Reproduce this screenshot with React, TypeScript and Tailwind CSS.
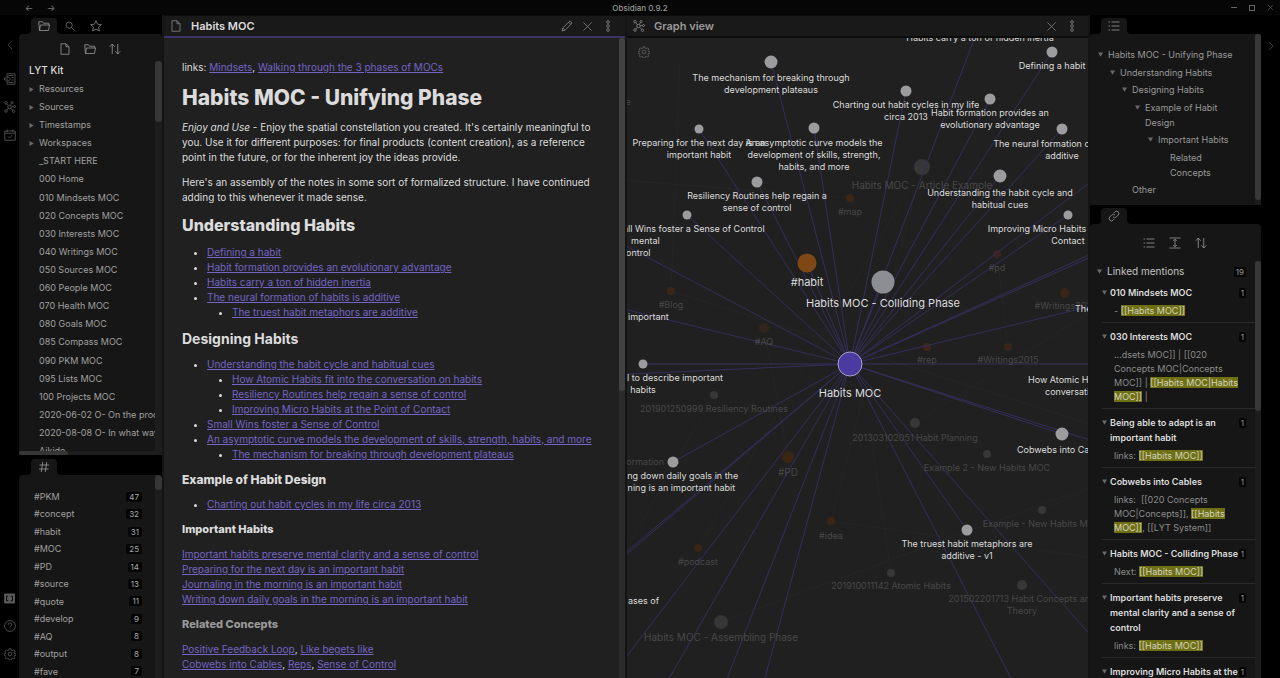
import React from 'react';
import clsx from 'clsx';

type IconProps = { children: React.ReactNode; size?: string; className?: string };

const Icon = ({ children, size = 'size-3', className }: IconProps) => (
  <svg
    viewBox="0 0 24 24"
    className={clsx(size, 'shrink-0', className)}
    fill="none"
    stroke="currentColor"
    strokeWidth="1.6"
    strokeLinejoin="round"
    aria-hidden="true"
  >
    {children}
  </svg>
);

const icons = {
  file: <path d="M4 1.5h10l6 6v15H4zM14 1.5v6h6" />,
  folder: <path d="M3 21L1.500 3.500H9l2 3h10.500V10M3 21L5 10h18l-2 11z" />,
  search: (
    <>
      <circle cx="10" cy="10" r="7.500" />
      <path d="M15.500 15.500l7 7" />
    </>
  ),
  star: <path d="M12 1.500l3.200 7 7.600.800-5.700 5.100 1.600 7.500-6.700-3.800-6.700 3.800 1.600-7.500L1.200 9.300l7.600-.800z" />,
  sort: <path d="M6.500 22V2M1.500 7.500l5-5.500 5 5.500M17.500 2v20M12.500 16.500l5 5.500 5-5.500" />,
  pencil: <path d="M2 22l1.500-6L18 1.800l4.200 4.200L8 20.500zM3.500 16L8 20.500M15.500 4.500l4 4" />,
  close: <path d="M3 3l18 18M21 3L3 21" />,
  dots: (
    <>
      <circle cx="12" cy="4" r="2.700" />
      <circle cx="12" cy="12" r="2.700" />
      <circle cx="12" cy="20" r="2.700" />
    </>
  ),
  graph: (
    <>
      <circle cx="11" cy="12" r="3.500" />
      <circle cx="4" cy="3.500" r="2.500" />
      <circle cx="16" cy="3" r="2" />
      <circle cx="21" cy="11" r="2" />
      <circle cx="19" cy="20.500" r="2.500" />
      <circle cx="4" cy="20" r="2.500" />
      <path d="M5.500 5.500l3.500 4M15 5l-2.500 4M19 11l-4.500.800M17.200 18.500l-4-4M5.600 18l3-3.500" />
    </>
  ),
  gear: (
    <>
      <circle cx="12" cy="12" r="3.800" />
      <path d="M10.200 1.500h3.600l.700 3 2.200.900 2.600-1.600 2.500 2.500-1.600 2.600.900 2.200 3 .700v2.400l-3 .700-.900 2.200 1.600 2.600-2.500 2.500-2.600-1.600-2.200.900-.700 3h-3.600l-.700-3-2.200-.900-2.600 1.600-2.500-2.500 1.600-2.600-.900-2.200-3-.700v-2.400l3-.700.900-2.200-1.600-2.600 2.500-2.500 2.600 1.600 2.200-.900z" />
    </>
  ),
  list: (
    <path d="M7 4h16M7 12h16M7 20h16M1 4h3M1 12h3M1 20h3" />
  ),
  expand: <path d="M1 2h22M1 22h22M12 4.500v15M8.500 8L12 4.500 15.500 8M8.500 16l3.500 3.500 3.500-3.500" />,
  link: (
    <path d="M10 14a4.500 4.500 0 0 0 6.500 0l4-4a4.600 4.600 0 0 0-6.500-6.500L11.500 6M14 10a4.500 4.500 0 0 0-6.500 0l-4 4a4.600 4.600 0 0 0 6.500 6.500l2.500-2.500" />
  ),
  hash: <path d="M3 8h19M2 16h19M9.500 2l-3 20M17.500 2l-3 20" />,
  left: <path d="M17 2L7 12l10 10" />,
  right: <path d="M7 2l10 10L7 22" />,
  quickOpen: (
    <>
      <path d="M6 8V1.500h16v21H6V16M9 5h10M15 9h4M15 14h4M9 19h10" />
      <path d="M1 10h7V7l5 5-5 5v-3H1z" />
    </>
  ),
  calendar: (
    <>
      <path d="M1.500 4h21v18.500h-21zM1.500 8.500h21M6.500 1v5M17.500 1v5" />
      <path d="M8 15l3 3 5.500-6" />
    </>
  ),
  vault: (
    <>
      <path d="M1 2h22v20H1z" fill="currentColor" />
      <path d="M9.500 7h-4v10h4M14.500 7h4v10h-4" stroke="#000" strokeWidth="2" />
    </>
  ),
  help: (
    <>
      <circle cx="12" cy="12" r="10.800" />
      <path d="M8.500 9.500a3.500 3.500 0 1 1 5 3.200c-1.200.600-1.500 1.200-1.500 2.500M12 17.200v1.800" />
    </>
  ),
};

type IconName = keyof typeof icons;

const IconButton = ({ name, label, size, className }: { name: IconName; label: string; size?: string; className?: string }) => (
  <button type="button" aria-label={label} className={clsx('flex items-center justify-center', className)}>
    <Icon size={size}>{icons[name]}</Icon>
  </button>
);

const files = [
  '_START HERE',
  '000 Home',
  '010 Mindsets MOC',
  '020 Concepts MOC',
  '030 Interests MOC',
  '040 Writings MOC',
  '050 Sources MOC',
  '060 People MOC',
  '070 Health MOC',
  '080 Goals MOC',
  '085 Compass MOC',
  '090 PKM MOC',
  '095 Lists MOC',
  '100 Projects MOC',
  '2020-06-02 O- On the process',
  '2020-08-08 O- In what ways',
  'Aikido',
];

const tags: [string, number][] = [
  ['#PKM', 47],
  ['#concept', 32],
  ['#habit', 31],
  ['#MOC', 25],
  ['#PD', 14],
  ['#source', 13],
  ['#quote', 11],
  ['#develop', 9],
  ['#AQ', 8],
  ['#output', 8],
  ['#fave', 7],
];

// Active tab with curved feet that blend into the panel below
const ActiveTab = ({ name, label }: { name: IconName; label: string }) => (
  <button
    type="button"
    aria-label={label}
    className="relative flex h-4 w-[26px] items-center justify-center rounded-t bg-[#161616] text-[#999]"
  >
    <Icon>{icons[name]}</Icon>
    <svg viewBox="0 0 4 4" className="absolute bottom-0 -left-1 size-1" aria-hidden="true">
      <path d="M4 0v4H0a4 4 0 0 0 4-4z" fill="#161616" />
    </svg>
    <svg viewBox="0 0 4 4" className="absolute -right-1 bottom-0 size-1" aria-hidden="true">
      <path d="M0 0v4h4a4 4 0 0 1-4-4z" fill="#161616" />
    </svg>
  </button>
);

const Caret = ({ open = false, className }: { open?: boolean; className?: string }) => (
  <svg viewBox="0 0 10 10" className={clsx('size-[5px] shrink-0', className)} fill="#6a6a6a" aria-hidden="true">
    {open ? <path d="M0 1h10L5 9.500z" /> : <path d="M1 0v10l8.500-5z" />}
  </svg>
);

const FileExplorer = () => (
  <section className="flex h-[421px] shrink-0 flex-col overflow-hidden rounded-t bg-[#161616]">
    <div className="flex h-[27px] shrink-0 items-center justify-center gap-[13px] pt-[2px] pr-[2px] text-[#999]">
      <IconButton name="file" label="New note" />
      <IconButton name="folder" label="New folder" />
      <IconButton name="sort" label="Change sort order" />
    </div>
    <div className="flex min-h-0 flex-1">
      <div className="min-w-0 flex-1 overflow-hidden">
        <h2 className="flex h-[19px] items-center pl-[10px] text-[10px] font-medium text-[#dcdcdc]">LYT Kit</h2>
        <ul className="text-[9px] text-[#a0a0a0]">
          {['Resources', 'Sources', 'Timestamps', 'Workspaces'].map((folder) => (
            <li key={folder}>
              <button type="button" className="flex h-[18px] w-full items-center gap-[5px] pl-[10px]">
                <Caret />
                {folder}
              </button>
            </li>
          ))}
        </ul>
        <ul className="grid h-[308px] auto-rows-fr text-[9px] text-[#a0a0a0]">
          {files.map((file) => (
            <li key={file}>
              <button type="button" className="flex h-full w-full items-center pl-5 whitespace-nowrap">
                {file}
              </button>
            </li>
          ))}
        </ul>
      </div>
      <div className="w-[7px] bg-[#1d1d1d]">
        <div className="h-[61px] rounded bg-[#363636]" />
      </div>
    </div>
    <div className="h-1 shrink-0 bg-[#1d1d1d]">
      <div className="h-1 w-[49px] rounded bg-[#363636]" />
    </div>
  </section>
);

const TagPane = () => (
  <section className="flex min-h-0 flex-1 overflow-hidden rounded-t bg-[#161616]">
    <ul className="mt-[13px] grid h-[192px] flex-1 auto-rows-fr pr-[13px] pl-[15px] text-[9px] text-[#a0a0a0]">
      {tags.map(([tag, count]) => (
        <li key={tag} className="flex items-center justify-between">
          <a href="#">{tag}</a>
          <span className="rounded-xs bg-[#050505] px-[3px] text-[8px] leading-[10px] text-[#aaa]">{count}</span>
        </li>
      ))}
    </ul>
    <div className="w-[7px] bg-[#1d1d1d]">
      <div className="h-[15px] rounded bg-[#363636]" />
    </div>
  </section>
);

const L = ({ children }: { children: React.ReactNode }) => (
  <a href="#" className="text-[#7464c4] underline">
    {children}
  </a>
);

const NotePane = () => (
  <main className="flex min-w-0 flex-1 flex-col bg-[#202020]">
    <header className="flex h-[23px] shrink-0 items-center border-t border-b-2 border-t-[#0c0c0c] border-b-[#3d3369] bg-[#191919] pr-[11px] pl-[6px] text-[#888]">
      <Icon>{icons.file}</Icon>
      <h1 className="flex-1 pl-[9px] text-[11px] leading-4 font-semibold text-[#dcdcdc]">Habits MOC</h1>
      <div className="flex items-center gap-[9px]">
        <IconButton name="pencil" label="Edit" />
        <IconButton name="close" label="Close note" size="size-[11px]" />
        <IconButton name="dots" label="More options" />
      </div>
    </header>
    <div className="flex min-h-0 flex-1">
      <article className="flex min-w-0 flex-1 flex-col gap-[10px] overflow-hidden pt-[22px] pr-6 pl-[18px] text-[10px] leading-[15px] text-[#dcdcdc] *:shrink-0">
        <p>
          links: <L>Mindsets</L>, <L>Walking through the 3 phases of MOCs</L>
        </p>
        <h1 className="text-[21px] leading-[25px] font-extrabold">Habits MOC - Unifying Phase</h1>
        <p>
          <em>Enjoy and Use</em> - Enjoy the spatial constellation you created. It's certainly meaningful to you. Use it
          for different purposes: for final products (content creation), as a reference point in the future, or for the
          inherent joy the ideas provide.
        </p>
        <p>
          Here's an assembly of the notes in some sort of formalized structure. I have continued adding to this whenever
          it made sense.
        </p>
        <h2 className="text-[16px] leading-5 font-extrabold">Understanding Habits</h2>
        <ul className="list-disc pl-[25px]">
          <li><L>Defining a habit</L></li>
          <li><L>Habit formation provides an evolutionary advantage</L></li>
          <li><L>Habits carry a ton of hidden inertia</L></li>
          <li>
            <L>The neural formation of habits is additive</L>
            <ul className="list-disc pl-[25px]">
              <li><L>The truest habit metaphors are additive</L></li>
            </ul>
          </li>
        </ul>
        <h3 className="text-[14px] leading-[17px] font-bold">Designing Habits</h3>
        <ul className="list-disc pl-[25px]">
          <li>
            <L>Understanding the habit cycle and habitual cues</L>
            <ul className="list-disc pl-[25px]">
              <li><L>How Atomic Habits fit into the conversation on habits</L></li>
              <li><L>Resiliency Routines help regain a sense of control</L></li>
              <li><L>Improving Micro Habits at the Point of Contact</L></li>
            </ul>
          </li>
          <li><L>Small Wins foster a Sense of Control</L></li>
          <li>
            <L>An asymptotic curve models the development of skills, strength, habits, and more</L>
            <ul className="list-disc pl-[25px]">
              <li><L>The mechanism for breaking through development plateaus</L></li>
            </ul>
          </li>
        </ul>
        <h4 className="text-[12px] font-extrabold">Example of Habit Design</h4>
        <ul className="list-disc pl-[25px]">
          <li><L>Charting out habit cycles in my life circa 2013</L></li>
        </ul>
        <h5 className="text-[11px] font-extrabold">Important Habits</h5>
        <p>
          <L>Important habits preserve mental clarity and a sense of control</L>
          <br />
          <L>Preparing for the next day is an important habit</L>
          <br />
          <L>Journaling in the morning is an important habit</L>
          <br />
          <L>Writing down daily goals in the morning is an important habit</L>
        </p>
        <h6 className="text-[11px] font-extrabold text-[#999]">Related Concepts</h6>
        <p>
          <L>Positive Feedback Loop</L>, <L>Like begets like</L>
          <br />
          <L>Cobwebs into Cables</L>, <L>Reps</L>, <L>Sense of Control</L>
        </p>
      </article>
      <div className="w-[6px] bg-[#2b2b2b]">
        <div className="h-[353px] rounded bg-[#424242]" />
      </div>
    </div>
  </main>
);

const hub = { x: 850, y: 364 };

type GraphNode = {
  x: number;
  y: number;
  r: number;
  lines: string[];
  labelY: number;
  size?: number;
  fill?: string;
};

const linked: GraphNode[] = [
  { x: 771, y: 62, r: 6, lines: ['The mechanism for breaking through', 'development plateaus'], labelY: 81 },
  { x: 906, y: 91, r: 5, lines: ['Charting out habit cycles in my life', 'circa 2013'], labelY: 108 },
  { x: 990, y: 99, r: 5, lines: ['Habit formation provides an', 'evolutionary advantage'], labelY: 116 },
  { x: 1052, y: 52, r: 5, lines: ['Defining a habit'], labelY: 69 },
  { x: 1062, y: 129, r: 5, lines: ['The neural formation of habits is', 'additive'], labelY: 147 },
  { x: 699, y: 129, r: 4, lines: ['Preparing for the next day is an', 'important habit'], labelY: 146 },
  { x: 814, y: 128, r: 5, lines: ['An asymptotic curve models the', 'development of skills, strength,', 'habits, and more'], labelY: 146 },
  { x: 757, y: 182, r: 5, lines: ['Resiliency Routines help regain a', 'sense of control'], labelY: 199 },
  { x: 687, y: 215, r: 4, lines: ['Small Wins foster a Sense of Control'], labelY: 232 },
  { x: 1000, y: 176, r: 6, lines: ['Understanding the habit cycle and', 'habitual cues'], labelY: 196 },
  { x: 1068, y: 215, r: 4, lines: ['Improving Micro Habits at the Point of', 'Contact'], labelY: 232 },
  { x: 807, y: 263, r: 9, lines: ['#habit'], labelY: 286, size: 11, fill: '#7f4715' },
  { x: 883, y: 282, r: 11, lines: ['Habits MOC - Colliding Phase'], labelY: 307, size: 11, fill: '#8d8d94' },
  { x: 643, y: 364, r: 4, lines: ['A mental model to describe important', 'habits'], labelY: 381 },
  { x: 673, y: 462, r: 5, lines: ['Writing down daily goals in the', 'morning is an important habit'], labelY: 479 },
  { x: 967, y: 530, r: 5, lines: ['The truest habit metaphors are', 'additive - v1'], labelY: 547 },
  { x: 1062, y: 434, r: 6, lines: ['Cobwebs into Cables'], labelY: 453 },
  { x: 980, y: 24, r: 5, lines: ['Habits carry a ton of hidden inertia'], labelY: 41 },
];

const faded: GraphNode[] = [
  { x: 922, y: 167, r: 8, lines: ['Habits MOC - Article Example'], labelY: 189, size: 10 },
  { x: 714, y: 395, r: 4, lines: ['201901250999 Resiliency Routines'], labelY: 412 },
  { x: 915, y: 423, r: 5, lines: ['201303102051 Habit Planning'], labelY: 441 },
  { x: 987, y: 454, r: 4, lines: ['Example 2 - New Habits MOC'], labelY: 471 },
  { x: 1042, y: 510, r: 4, lines: ['Example - New Habits MOC'], labelY: 527 },
  { x: 891, y: 573, r: 4, lines: ['201910011142 Atomic Habits'], labelY: 589 },
  { x: 1022, y: 585, r: 5, lines: ['201502201713 Habit Concepts and', 'Theory'], labelY: 602 },
  { x: 721, y: 622, r: 7, lines: ['Habits MOC - Assembling Phase'], labelY: 641, size: 10 },
  { x: 671, y: 291, r: 4, lines: ['#Blog'], labelY: 308, fill: '#3a2718' },
  { x: 764, y: 328, r: 5, lines: ['#AQ'], labelY: 345, fill: '#33251a' },
  { x: 850, y: 198, r: 4, lines: ['#map'], labelY: 215, fill: '#3a2718' },
  { x: 997, y: 254, r: 4, lines: ['#pd'], labelY: 271, fill: '#3a2420' },
  { x: 1065, y: 293, r: 5, lines: ['#Writings2016'], labelY: 309, fill: '#3a2418' },
  { x: 927, y: 347, r: 4, lines: ['#rep'], labelY: 363, fill: '#40261f' },
  { x: 1008, y: 347, r: 4, lines: ['#Writings2015'], labelY: 363, fill: '#3a2418' },
  { x: 788, y: 457, r: 6, lines: ['#PD'], labelY: 476, size: 10, fill: '#3a2515' },
  { x: 831, y: 521, r: 4, lines: ['#idea'], labelY: 539, fill: '#3a2515' },
  { x: 698, y: 548, r: 4, lines: ['#podcast'], labelY: 565, fill: '#3a2515' },
];

// Linked notes that sit outside the visible canvas
const offscreen = [
  [607, 236], [607, 305], [607, 375], [600, 574], [600, 577], [607, 682], [659, 696], [721, 694], [760, 696],
  [1020, 696], [1109, 656], [1109, 168], [1109, 246], [1109, 249], [1109, 302], [1109, 364], [1109, 446],
];

const faintEdges = [
  [922, 167, 831, 521], [922, 167, 698, 548], [671, 291, 1109, 430], [997, 254, 1008, 347], [1065, 293, 1109, 330],
  [714, 395, 620, 560], [788, 457, 764, 328], [915, 423, 1109, 300], [721, 622, 1109, 480], [891, 573, 870, 430],
  [850, 198, 620, 180], [1042, 510, 1109, 480], [671, 291, 680, 60], [831, 521, 1109, 560],
];

// Labels whose node is off the left or right edge of the canvas
const edgeLabels = [
  { x: 631, y: 244, text: 'mental' },
  { x: 626, y: 256, text: 'ontrol' },
  { x: 628, y: 320, text: 'important' },
  { x: 628, y: 604, text: 'ases of' },
  { x: 1075, y: 312, text: 'The benefits' },
  { x: 1028, y: 383, text: 'How Atomic Habits fit into' },
  { x: 1045, y: 395, text: 'conversation on' },
];

const NodeLabel = ({ node, fill }: { node: GraphNode; fill: string }) => (
  <text textAnchor="middle" fontSize={node.size ?? 9} fill={fill}>
    {node.lines.map((line, i) => (
      <tspan key={line} x={node.x} y={node.labelY + i * 12}>
        {line}
      </tspan>
    ))}
  </text>
);

const GraphCanvas = () => (
  <svg className="size-full" role="img" aria-label="Graph of notes linked to Habits MOC">
    <g transform="translate(-627 -38)">
      <g stroke="#252525">
        {faintEdges.map(([x1, y1, x2, y2], i) => (
          <line key={i} x1={x1} y1={y1} x2={x2} y2={y2} />
        ))}
      </g>
      {faded.map((node) => (
        <circle key={node.lines[0]} cx={node.x} cy={node.y} r={node.r} fill={node.fill ?? '#373737'} />
      ))}
      <g stroke="#352e5c">
        {linked.map((node) => (
          <line key={node.lines[0]} x1={hub.x} y1={hub.y} x2={node.x} y2={node.y} />
        ))}
        {offscreen.map(([x, y], i) => (
          <line key={i} x1={hub.x} y1={hub.y} x2={x} y2={y} />
        ))}
      </g>
      {linked.map((node) => (
        <circle key={node.lines[0]} cx={node.x} cy={node.y} r={node.r + 0.5} fill={node.fill ?? '#9c9c9f'} />
      ))}
      <circle cx={hub.x} cy={hub.y} r="12" fill="#4b3a9f" stroke="#a7a3c4" />
      {faded.map((node) => (
        <NodeLabel key={node.lines[0]} node={node} fill="#484848" />
      ))}
      <text x="664" y="465" fontSize="9" textAnchor="end" fill="#484848">formation</text>
      <text x="628" y="105" fontSize="9" textAnchor="middle" fill="#484848">e</text>
      {linked.map((node) => (
        <NodeLabel key={node.lines[0]} node={node} fill="#dcdcdc" />
      ))}
      {edgeLabels.map((label) => (
        <text key={label.text} x={label.x} y={label.y} fontSize="9" fill="#dcdcdc">
          {label.text}
        </text>
      ))}
      <text x={hub.x} y="397" fontSize="11" textAnchor="middle" fill="#dcdcdc">Habits MOC</text>
    </g>
  </svg>
);

const GraphPane = () => (
  <section className="flex min-w-0 flex-1 flex-col bg-[#202020]">
    <header className="flex h-[23px] shrink-0 items-center border-t border-b-2 border-t-[#0c0c0c] border-b-[#0c0c0c] bg-[#191919] pr-[10px] pl-[6px] text-[#888]">
      <Icon>{icons.graph}</Icon>
      <h1 className="flex-1 pl-[9px] text-[11px] leading-4 font-semibold text-[#999]">Graph view</h1>
      <div className="flex items-center gap-[9px]">
        <IconButton name="close" label="Close graph" size="size-[11px]" />
        <IconButton name="dots" label="Graph options" />
      </div>
    </header>
    <div className="relative min-h-0 flex-1 overflow-hidden">
      <GraphCanvas />
      <IconButton name="gear" label="Graph settings" className="absolute top-2 left-[11px] text-[#666]" />
    </div>
  </section>
);

const outline = [
  { text: 'Habits MOC - Unifying Phase', pad: 'pl-2' },
  { text: 'Understanding Habits', pad: 'pl-5' },
  { text: 'Designing Habits', pad: 'pl-8' },
  { text: 'Example of Habit Design', pad: 'pl-[45px]' },
  { text: 'Important Habits', pad: 'pl-[58px]' },
  { text: 'Related Concepts', pad: 'pl-[70px]', leaf: true },
  { text: 'Other', pad: 'pl-8', leaf: true },
];

const OutlinePane = () => (
  <section className="flex h-[171px] shrink-0 rounded-t bg-[#161616]">
    <ul className="mt-[13px] flex h-[150px] flex-1 flex-col justify-between pr-[18px] text-[9px] leading-[15px] text-[#999]">
      {outline.map((item) => (
        <li key={item.text} className={item.pad}>
          <button type="button" className="flex items-start gap-[5px] text-left">
            {item.leaf ? <span className="w-[5px] shrink-0" /> : <Caret open className="mt-[5px]" />}
            <span>{item.text}</span>
          </button>
        </li>
      ))}
    </ul>
    <div className="w-[6px] bg-[#1d1d1d]">
      <div className="h-[166px] rounded bg-[#383838]" />
    </div>
  </section>
);

const M = ({ children }: { children: React.ReactNode }) => (
  <mark className="bg-[#6f6f14] text-[#d4d4c0]">{children}</mark>
);

const mentions: { title: string; body: React.ReactNode }[] = [
  { title: '010 Mindsets MOC', body: <>- <M>[[Habits MOC]]</M></> },
  {
    title: '030 Interests MOC',
    body: <>...dsets MOC]] | [[020 Concepts MOC|Concepts MOC]] | <M>[[Habits MOC|Habits MOC]]</M> |</>,
  },
  { title: 'Being able to adapt is an important habit', body: <>links: <M>[[Habits MOC]]</M></> },
  {
    title: 'Cobwebs into Cables',
    body: <>links:&nbsp; [[020 Concepts MOC|Concepts]], <M>[[Habits MOC]]</M>, [[LYT System]]</>,
  },
  { title: 'Habits MOC - Colliding Phase', body: <>Next: <M>[[Habits MOC]]</M></> },
  { title: 'Important habits preserve mental clarity and a sense of control', body: <>links: <M>[[Habits MOC]]</M></> },
  { title: 'Improving Micro Habits at the Point of Contact', body: <>links: <M>[[Habits MOC]]</M></> },
];

const Count = ({ children }: { children: React.ReactNode }) => (
  <span className="mt-[3px] h-[10px] rounded-xs bg-[#050505] px-[2px] text-[8px] leading-[10px] text-[#999]">
    {children}
  </span>
);

const BacklinksPane = () => (
  <section className="flex min-h-0 flex-1 flex-col rounded-t bg-[#161616]">
    <div className="flex h-[37px] shrink-0 items-center justify-center gap-[14px] pr-[1px] text-[#999]">
      <IconButton name="list" label="Collapse results" />
      <IconButton name="expand" label="Show more context" />
      <IconButton name="sort" label="Change sort order" />
    </div>
    <div className="flex min-h-0 flex-1">
      <div className="min-w-0 flex-1 overflow-hidden pl-[7px]">
        <button type="button" className="flex w-full items-center pt-[3px] pr-[9px] text-left text-[10px] leading-[15px] text-[#c4c4c4]">
          <Caret open />
          <span className="flex-1 pl-[5px]">Linked mentions</span>
          <span className="rounded-xs bg-[#050505] px-[2px] text-[8px] leading-[10px] text-[#999]">19</span>
        </button>
        <ul className="pl-[5px]">
          {mentions.map((mention) => (
            <li key={mention.title} className="border-b border-[#2a2a2a] pt-[6px] pb-1">
              <button type="button" className="flex w-full items-start pr-[9px] text-left">
                <Caret open className="mt-[5px]" />
                <span className="flex-1 pl-[3px] text-[9px] leading-[15px] font-semibold text-[#dcdcdc]">
                  {mention.title}
                </span>
                <Count>1</Count>
              </button>
              <p className="mt-1 pr-[14px] pl-3 text-[9px] leading-[14px] text-[#8c8c8c]">{mention.body}</p>
            </li>
          ))}
        </ul>
      </div>
      <div className="w-[6px] bg-[#1d1d1d]">
        <div className="h-[150px] rounded bg-[#383838]" />
      </div>
    </div>
  </section>
);

export default function App() {
  return (
    <div className="flex h-screen flex-col overflow-hidden bg-black font-['Inter',sans-serif]">
      <header className="grid h-[15px] shrink-0 grid-cols-3 items-center bg-[#060606] text-[#777]">
        <nav className="flex gap-3 pl-6">
          <IconButton name="left" label="Back" size="hidden" className="h-3 w-[10px] text-[9px] before:content-['←']" />
          <IconButton name="right" label="Forward" size="hidden" className="h-3 w-[10px] text-[9px] before:content-['→']" />
        </nav>
        <span className="text-center text-[8px] leading-3 font-medium text-[#999]">Obsidian 0.9.2</span>
        <div className="flex items-center justify-end gap-3 pr-[6px]">
          <button type="button" aria-label="Minimize" className="h-px w-[6px] bg-[#666]" />
          <button type="button" aria-label="Maximize" className="size-[6px] border border-[#666]" />
          <IconButton name="close" label="Close window" size="size-[7px]" />
        </div>
      </header>

      <div className="flex min-h-0 flex-1">
        <aside className="flex w-[19px] shrink-0 flex-col items-center text-[#5c5c5c]">
          <IconButton name="left" label="Collapse left sidebar" className="mt-[25px]" size="size-[10px]" />
          <IconButton name="quickOpen" label="Quick switcher" className="mt-[23px]" />
          <IconButton name="graph" label="Open graph view" className="mt-4" />
          <IconButton name="calendar" label="Open today's daily note" className="mt-4" />
          <IconButton name="vault" label="Open another vault" className="mt-auto" size="size-[11px]" />
          <IconButton name="help" label="Help" className="mt-4" />
          <IconButton name="gear" label="Settings" className="mt-4 mb-[18px]" />
        </aside>

        <aside className="flex w-[143px] shrink-0 flex-col">
          <div className="flex h-[19px] shrink-0 items-end pl-3 text-[#888]">
            <ActiveTab name="folder" label="File explorer" />
            <IconButton name="search" label="Search" className="h-4 w-[26px]" size="size-[10px]" />
            <IconButton name="star" label="Starred" className="h-4 w-[26px]" />
          </div>
          <FileExplorer />
          <div className="flex h-[20px] shrink-0 items-end pl-3">
            <ActiveTab name="hash" label="Tag pane" />
          </div>
          <TagPane />
        </aside>

        <div className="flex min-w-0 flex-1 gap-[2px] bg-[#141414] px-[2px]">
          <NotePane />
          <GraphPane />
        </div>

        <aside className="flex w-[171px] shrink-0 flex-col">
          <div className="flex h-[19px] shrink-0 items-end pl-[11px]">
            <ActiveTab name="list" label="Outline" />
          </div>
          <OutlinePane />
          <div className="flex h-[19px] shrink-0 items-end pl-[11px]">
            <ActiveTab name="link" label="Backlinks" />
          </div>
          <BacklinksPane />
        </aside>

        <aside className="flex w-[19px] shrink-0 flex-col items-center text-[#5c5c5c]">
          <IconButton name="right" label="Collapse right sidebar" className="mt-[26px]" size="size-[10px]" />
        </aside>
      </div>
    </div>
  );
}
